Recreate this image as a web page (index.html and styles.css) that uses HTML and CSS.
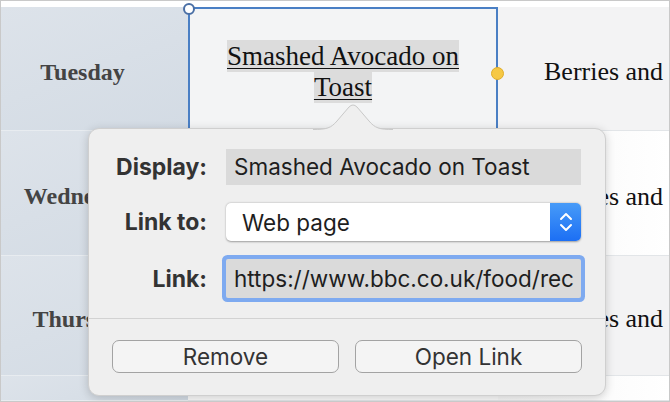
FILE: index.html
```html
<!DOCTYPE html>
<html lang="en">
<head>
  <meta charset="UTF-8">
  <title>Edit Link</title>
  <link rel="stylesheet" href="styles.css">
</head>
<body>
  <div class="sheet">
    <div class="table">
      <div class="cell day">Tuesday</div>
      <div class="cell meal selected">
        <p class="linked"><span>Smashed Avocado on Toast</span></p>
        <span class="handle handle-top"></span>
        <span class="handle handle-side"></span>
      </div>
      <div class="cell meal shade">Berries and</div>

      <div class="cell day">Wednesday</div>
      <div class="cell meal"></div>
      <div class="cell meal plain">Berries and</div>

      <div class="cell day">Thursday</div>
      <div class="cell meal"></div>
      <div class="cell meal shade">Berries and</div>

      <div class="cell day"></div>
      <div class="cell meal"></div>
      <div class="cell meal plain"></div>
    </div>

    <div class="popover">
      <svg class="arrow" width="80" height="26" viewBox="0 0 80 26">
        <path d="M0 25.5 C14 25.5 18 24 24 17 L36 3 Q40 -1 44 3 L56 17 C62 24 66 25.5 80 25.5" fill="#efefef" stroke="#c9c9c9" stroke-width="1"/>
      </svg>
      <div class="form">
        <label>Display:</label>
        <div class="field">Smashed Avocado on Toast</div>

        <label>Link to:</label>
        <div class="select">
          <span>Web page</span>
          <span class="stepper">
            <svg width="16" height="26" viewBox="0 0 16 26">
              <path d="M3 10 L8 5 L13 10 M3 16 L8 21 L13 16" fill="none" stroke="#fff" stroke-width="2" stroke-linecap="round" stroke-linejoin="round"/>
            </svg>
          </span>
        </div>

        <label>Link:</label>
        <div class="field focus">https://www.bbc.co.uk/food/rec</div>
      </div>
      <div class="actions">
        <button>Remove</button>
        <button>Open Link</button>
      </div>
    </div>
  </div>
</body>
</html>
```

FILE: styles.css
```css
html, body { margin: 0; padding: 0; }
body { width: 670px; height: 402px; overflow: hidden; background: #fff; }

.sheet {
  position: relative;
  width: 668px; height: 400px;
  border: 1px solid #c9c9c9;
  background: #fff;
  overflow: hidden;
}

.table {
  display: grid;
  grid-template-columns: 187px 310px 1fr;
  grid-template-rows: 124px 125px 120px 1fr;
  height: 394px;
  margin-top: 6px;
  font-family: "Liberation Serif", "DejaVu Serif", serif;
}
.cell {
  display: flex;
  align-items: center;
  justify-content: center;
  box-sizing: border-box;
  padding-top: 7px;
  border-bottom: 1px solid #e2e5e8;
  white-space: nowrap;
  overflow: hidden;
}
.day {
  background: linear-gradient(160deg, #dde3ea, #d3dbe4);
  color: #444;
  font-weight: bold;
  font-size: 24px;
  padding-right: 24px;
  border-bottom-color: #e8ecf0;
}
.meal { background: #fafafa; color: #111; font-size: 26px; }
.meal.shade { background: #f3f3f4; justify-content: flex-start; padding-left: 46px; }
.meal.plain { background: linear-gradient(90deg, #f6f6f6, #fff); justify-content: flex-start; padding-left: 46px; }

.selected {
  position: relative;
  overflow: visible;
  padding-top: 0;
  background: #f3f4f5;
  border-left: 2px solid #4a7fc4;
  border-right: 2px solid #4a7fc4;
  border-top: 2px solid #4a7fc4;
  white-space: normal;
}
.linked {
  width: 250px;
  margin: 4px 0 0;
  text-align: center;
  font-size: 27px;
  line-height: 31px;
}
.linked span {
  background: #dcdcdc;
  text-decoration: underline;
  text-decoration-thickness: 1px;
  text-underline-offset: 3px;
  padding: 1px 0;
}
.handle {
  position: absolute;
  border-radius: 50%;
  box-sizing: border-box;
}
.handle-top {
  left: -7px; top: -6px;
  width: 12px; height: 12px;
  background: #fff;
  border: 2px solid #4a6fa5;
}
.handle-side {
  right: -8px; top: 58px;
  width: 13px; height: 13px;
  background: #f6c844;
  border: 1px solid #e0ad2a;
}

.popover {
  position: absolute;
  left: 87px; top: 127px;
  width: 516px; height: 266px;
  background: #efefef;
  border: 1px solid #cfcfcf;
  border-radius: 11px;
  box-shadow: 0 2px 10px rgba(0, 0, 0, 0.18);
  font-family: Inter, "Noto Sans", sans-serif;
  color: #1e1e1e;
}
.arrow {
  position: absolute;
  left: 224px; top: -25px;
}

.form {
  display: grid;
  grid-template-columns: 118px 355px;
  grid-template-rows: 36px 38px 39px;
  column-gap: 19px;
  row-gap: 18px;
  padding-top: 20px;
  align-items: center;
}
.form label {
  text-align: right;
  font-weight: 700;
  font-size: 23px;
  color: #333;
}
.field {
  height: 36px;
  background: #dadada;
  font-size: 22.5px;
  line-height: 36px;
  padding-left: 8px;
  white-space: nowrap;
  overflow: hidden;
}
.field.focus {
  height: 39px;
  line-height: 39px;
  box-shadow: 0 0 0 4px #7eaaf0;
  border-radius: 2px;
}
.select {
  display: flex;
  align-items: center;
  height: 38px;
  background: #fff;
  border-radius: 5px;
  box-shadow: 0 0.5px 2px rgba(0, 0, 0, 0.35);
  font-size: 22.5px;
  padding-left: 16px;
  overflow: hidden;
}
.select span:first-child { flex: 1; }
.stepper {
  display: flex;
  align-items: center;
  justify-content: center;
  width: 31px;
  height: 100%;
  background: linear-gradient(#479bf8, #1c6ff4);
}
.stepper svg { display: block; }

.actions {
  display: flex;
  gap: 16px;
  margin-top: 20px;
  border-top: 1px solid #d2d2d2;
  padding: 21px 23px 0;
}
.actions button {
  flex: 1;
  height: 33px;
  background: #f4f4f4;
  border: 1px solid #a3a3a3;
  border-radius: 7px;
  font-family: Inter, "Noto Sans", sans-serif;
  font-size: 22.5px;
  color: #333;
  padding: 0;
}
```
